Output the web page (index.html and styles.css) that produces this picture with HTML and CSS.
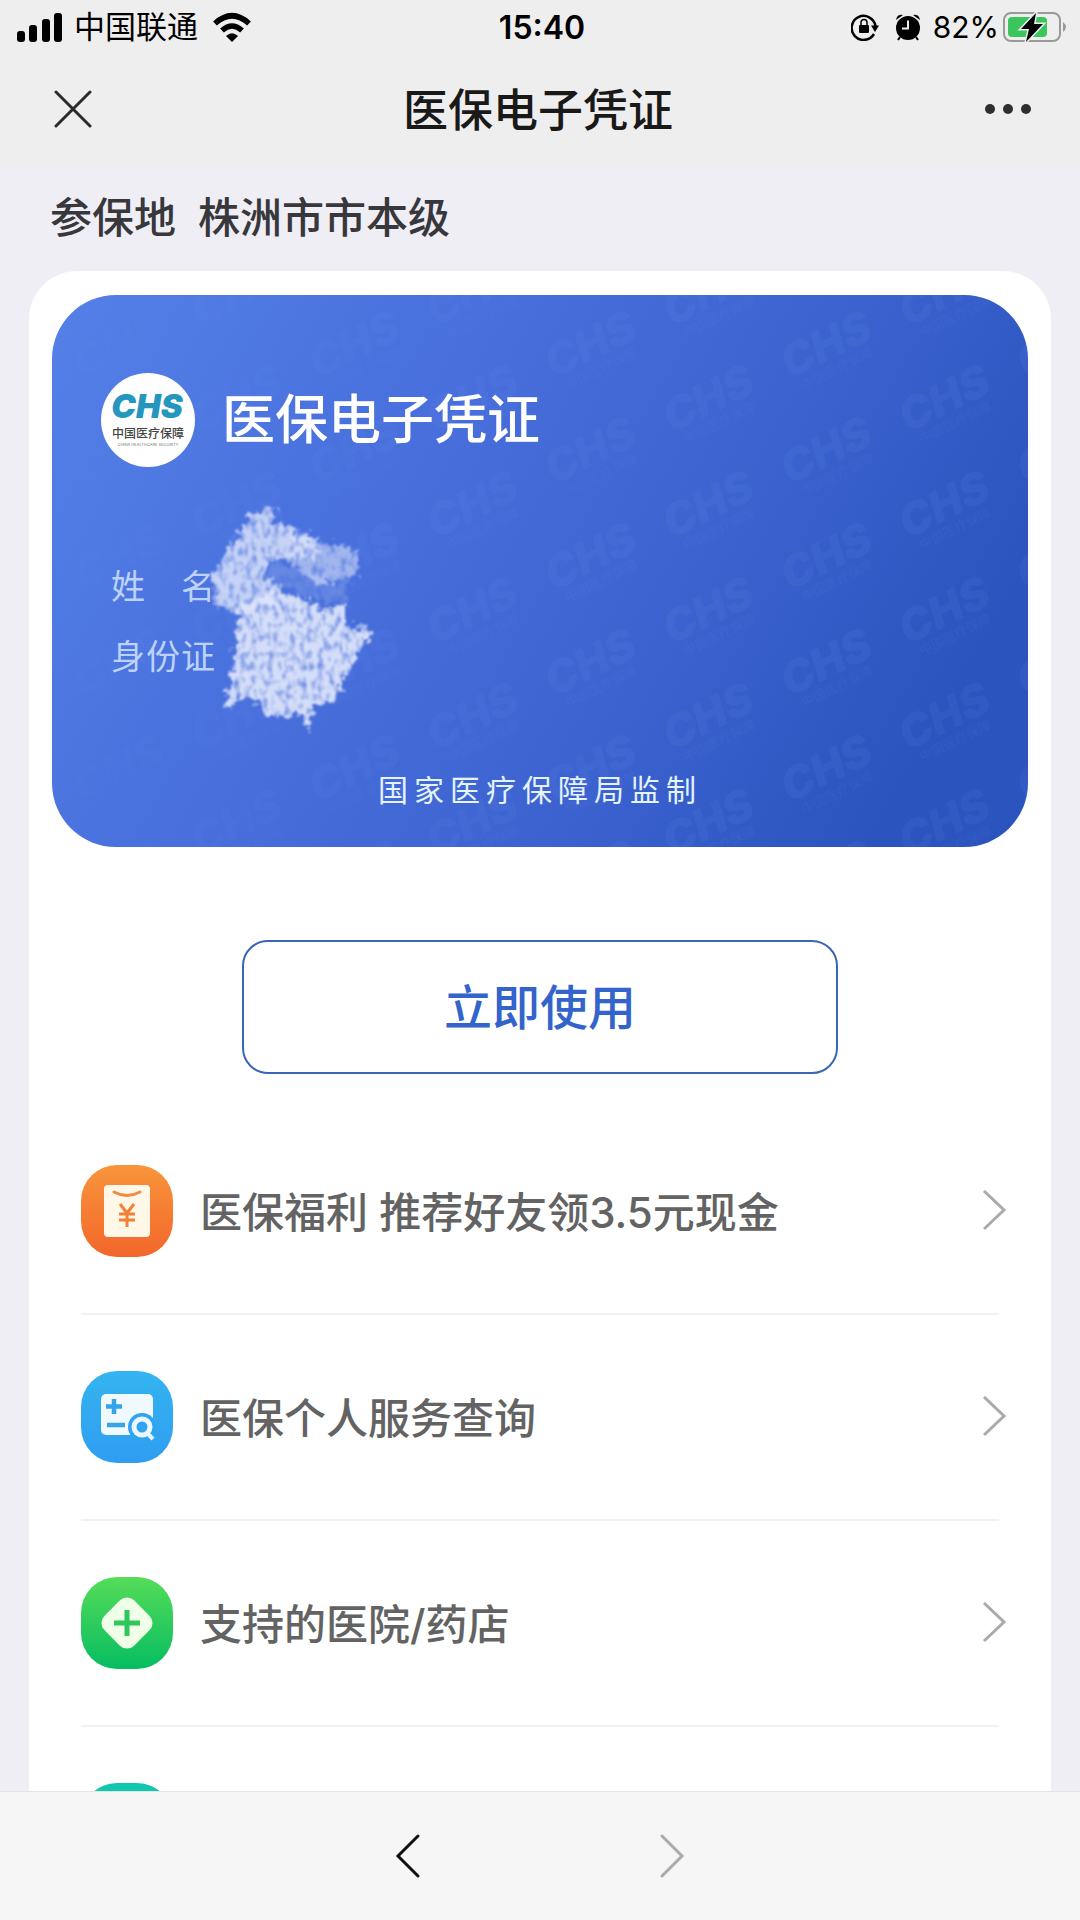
FILE: index.html
```html
<!DOCTYPE html>
<html lang="zh-CN">

<head>
    <meta charset="UTF-8">
    <meta name="viewport" content="width=device-width">
    <title>医保电子凭证</title>
    <link rel="stylesheet" href="styles.css">
</head>

<body>
    <header class="top">
        <div class="status">
            <div class="status-left">
                <svg width="46" height="30" viewBox="0 0 46 30">
                    <rect x="0" y="19" width="8" height="11" rx="3" />
                    <rect x="12" y="13" width="8" height="17" rx="3" />
                    <rect x="25" y="7" width="8" height="23" rx="3" />
                    <rect x="37" y="1" width="8" height="29" rx="3" />
                </svg>
                <span class="carrier">中国联通</span>
                <svg class="wifi" width="40" height="30" viewBox="0 0 40 30">
                    <path d="M3 11.500Q20-4 37 11.500M10 18.500Q20 9.500 30 18.500" fill="none" stroke="#000" stroke-width="5.500" />
                    <path d="M14 24Q20 18.500 26 24L20 30Z" />
                </svg>
            </div>
            <time class="clock">15:40</time>
            <div class="status-right">
                <svg width="28" height="28" viewBox="0 0 28 28">
                    <path d="M23 21A12 12 0 1 1 24.500 13" fill="none" stroke="#000" stroke-width="2.500" />
                    <path d="M20 12.500H28L24 19Z" />
                    <rect x="8" y="12" width="10" height="8" rx="1" />
                    <path d="M10 12V9.500A3 3 0 0 1 16 9.500V12" fill="none" stroke="#000" stroke-width="1.500" />
                </svg>
                <svg class="alarm" width="26" height="28" viewBox="0 0 26 28">
                    <path d="M5 24L3 27M21 24L23 27" stroke="#000" stroke-width="2" />
                    <path d="M1 7Q2 1 8 2ZM25 7Q24 1 18 2Z" />
                    <circle cx="13" cy="15" r="12" />
                    <path d="M13 7.500V15.500H7" fill="none" stroke="#eee" stroke-width="2" />
                </svg>
                <span class="percent">82%</span>
                <svg width="64" height="32" viewBox="0 0 64 32">
                    <rect x="1" y="2" width="56" height="28" rx="7" fill="none" stroke="#999" stroke-width="2" />
                    <rect x="5" y="6" width="39" height="20" rx="4" fill="#3ac55d" />
                    <path d="M60 11Q66 16 60 21Z" fill="#999" />
                    <path d="M33 2L18 18H26L23 31L40 13H31Z" stroke="#eee" stroke-width="3" paint-order="stroke" />
                </svg>
            </div>
        </div>
        <div class="navbar">
            <button type="button" class="nav-btn" aria-label="关闭">
                <svg width="38" height="38" viewBox="0 0 38 38">
                    <path d="M2 2L36 36M36 2L2 36" fill="none" stroke="#2b2b2b" stroke-width="3" stroke-linecap="round" />
                </svg>
            </button>
            <h1>医保电子凭证</h1>
            <button type="button" class="nav-btn" aria-label="更多">
                <svg width="48" height="12" viewBox="0 0 48 12" fill="#2f2f2f">
                    <circle cx="6" cy="6" r="5" />
                    <circle cx="24" cy="6" r="5" />
                    <circle cx="42" cy="6" r="5" />
                </svg>
            </button>
        </div>
    </header>

    <main>
        <p class="area"><span>参保地</span><span>株洲市市本级</span></p>

        <div class="panel">
            <section class="card">
                <svg class="watermark" width="100%" height="100%" aria-hidden="true">
                    <defs>
                        <pattern id="chs" width="236" height="106" patternUnits="userSpaceOnUse">
                            <g id="mark" transform="translate(30 84) rotate(-26)">
                                <text class="mark-big">CHS</text>
                                <text class="mark-small" x="8" y="16">中国医疗保障</text>
                            </g>
                            <use href="#mark" x="118" y="-52" />
                            <use href="#mark" x="118" y="54" />
                            <use href="#mark" y="-106" />
                        </pattern>
                    </defs>
                    <rect width="100%" height="100%" fill="url(#chs)" />
                </svg>

                <div class="card-head">
                    <svg width="94" height="94" viewBox="0 0 94 94">
                        <circle cx="47" cy="47" r="47" fill="#fff" />
                        <text class="logo-chs" x="46" y="45" text-anchor="middle">CHS</text>
                        <text class="logo-cn" x="47" y="65" text-anchor="middle">中国医疗保障</text>
                        <text class="logo-en" x="47" y="73" text-anchor="middle">CHINA HEALTHCARE SECURITY</text>
                    </svg>
                    <h2>医保电子凭证</h2>
                </div>
                <div class="info">
                    <p><span>姓</span><span>名</span></p>
                    <p><span>身</span><span>份</span><span>证</span></p>
                </div>
                <p class="issuer">国家医疗保障局监制</p>

                <!-- 涂抹遮挡个人信息 -->
                <svg class="scribble" width="180" height="240" viewBox="480 50 540 720" aria-hidden="true">
                    <defs>
                        <filter id="chalk" x="-10%" y="-10%" width="120%" height="120%">
                            <feTurbulence type="fractalNoise" baseFrequency="0.045" numOctaves="3" seed="4" result="rough" />
                            <feDisplacementMap in="SourceGraphic" in2="rough" scale="60" xChannelSelector="R" yChannelSelector="G" result="shape" />
                            <feTurbulence type="fractalNoise" baseFrequency="0.06 0.035" numOctaves="2" seed="8" />
                            <feColorMatrix values="0 0 0 0 1  0 0 0 0 1  0 0 0 0 1  2 0 0 0 -0.100" result="grain" />
                            <feComposite in="shape" in2="grain" operator="in" />
                            <feGaussianBlur stdDeviation="3" />
                        </filter>
                    </defs>
                    <g filter="url(#chalk)" fill="#dce4fa">
                        <path d="M630 105L705 80L700 130L750 140L830 180L830 240L750 235L680 240L670 290L730 320L700 380L590 400L530 380L515 290L570 200Z" opacity="0.850" />
                        <path d="M750 150L830 180L945 205L955 285L840 315L750 250Z" opacity="0.600" />
                        <path d="M600 380L690 330L780 350L850 385L925 370L930 450L985 435L990 465L915 590L880 660L820 680L800 745L775 700L710 715L640 660L590 650L575 685L555 665L580 560L590 430Z" opacity="0.950" />
                        <path d="M690 240L800 280L930 300L920 380L780 340L680 300Z" opacity="0.200" />
                    </g>
                </svg>
            </section>

            <button type="button" class="use-btn">立即使用</button>

            <ul class="list">
                <li>
                    <a href="#">
                        <svg width="92" height="92" viewBox="0 0 92 92">
                            <defs>
                                <linearGradient id="orange" x2="0" y2="1">
                                    <stop stop-color="#f8953b" />
                                    <stop offset="1" stop-color="#f3662b" />
                                </linearGradient>
                            </defs>
                            <rect width="92" height="92" rx="36" fill="url(#orange)" />
                            <rect x="23" y="20" width="46" height="52" rx="4" fill="#fff7e8" />
                            <path d="M33 27Q46 34 59 27" fill="none" stroke="#f28b3f" stroke-width="3" stroke-linecap="round" />
                            <path d="M39 39L46 48L53 39M46 48V62M38 49H54M38 55H54" fill="none" stroke="#f28036" stroke-width="3" />
                        </svg>
                        <span class="list-text">医保福利 推荐好友领3.5元现金</span>
                        <svg class="chevron" width="26" height="42" viewBox="0 0 26 42">
                            <path d="M3 1L23 20L3 39" />
                        </svg>
                    </a>
                </li>
                <li>
                    <a href="#">
                        <svg width="92" height="92" viewBox="0 0 92 92">
                            <defs>
                                <linearGradient id="blue" x2="0" y2="1">
                                    <stop stop-color="#34b4f0" />
                                    <stop offset="1" stop-color="#2f9df2" />
                                </linearGradient>
                            </defs>
                            <rect width="92" height="92" rx="36" fill="url(#blue)" />
                            <rect x="20" y="23" width="52" height="41" rx="5" fill="#eff9ff" />
                            <path d="M33 28V43M25 35.500H41M26 54H44" stroke="#35a4e8" stroke-width="4.500" />
                            <circle cx="61" cy="56" r="14" fill="#31a3f0" />
                            <circle cx="61" cy="56" r="8" fill="none" stroke="#eaf7ff" stroke-width="5" />
                            <path d="M66 62L72 68" stroke="#eaf7ff" stroke-width="4" />
                        </svg>
                        <span class="list-text">医保个人服务查询</span>
                        <svg class="chevron" width="26" height="42" viewBox="0 0 26 42">
                            <path d="M3 1L23 20L3 39" />
                        </svg>
                    </a>
                </li>
                <li>
                    <a href="#">
                        <svg width="92" height="92" viewBox="0 0 92 92">
                            <defs>
                                <linearGradient id="green" x2="0" y2="1">
                                    <stop stop-color="#55dc59" />
                                    <stop offset="1" stop-color="#06bd61" />
                                </linearGradient>
                            </defs>
                            <rect width="92" height="92" rx="36" fill="url(#green)" />
                            <rect x="25" y="25" width="42" height="42" rx="10" fill="#f0ffe8" transform="rotate(45 46 46)" />
                            <path d="M46 33V59M33 46H59" stroke="#2fc65c" stroke-width="5" />
                        </svg>
                        <span class="list-text">支持的医院/药店</span>
                        <svg class="chevron" width="26" height="42" viewBox="0 0 26 42">
                            <path d="M3 1L23 20L3 39" />
                        </svg>
                    </a>
                </li>
                <li>
                    <a href="#" aria-label="更多服务">
                        <svg width="92" height="92" viewBox="0 0 92 92">
                            <rect width="92" height="92" rx="36" fill="#12c7b0" />
                        </svg>
                    </a>
                </li>
            </ul>
        </div>
    </main>

    <nav class="toolbar">
        <button type="button" aria-label="后退">
            <svg width="26" height="46" viewBox="0 0 26 46">
                <path d="M23 3L3 23L23 43" fill="none" stroke="#111" stroke-width="3" stroke-linecap="round" />
            </svg>
        </button>
        <button type="button" aria-label="前进">
            <svg width="26" height="46" viewBox="0 0 26 46">
                <path d="M3 3L23 23L3 43" fill="none" stroke="#aaa" stroke-width="3" stroke-linecap="round" />
            </svg>
        </button>
    </nav>
</body>

</html>
```

FILE: styles.css
```css
* {
    box-sizing: border-box;
}

body {
    font-family: 'Inter', 'Noto Sans CJK SC', sans-serif;
    background-color: #efeef4;
    color: #38373c;
    display: flex;
    flex-direction: column;
    height: 100vh;
    margin: 0;
}

h1,
h2,
p,
ul {
    margin: 0;
    padding: 0;
}

svg {
    display: block;
    flex-shrink: 0;
}

button {
    font-family: inherit;
    border: none;
    background: none;
    padding: 0;
    cursor: pointer;
}

.top {
    background-color: #eee;
}

/* 状态栏 */
.status {
    display: grid;
    grid-template-columns: 1fr auto 1fr;
    align-items: center;
    height: 54px;
    padding: 0 13px 0 17px;
    color: #000;
}

.status-left,
.status-right {
    display: flex;
    align-items: center;
}

.status-right {
    justify-content: flex-end;
}

.carrier {
    font-size: 31px;
    line-height: 40px;
    margin: 0 14px 0 11px;
}

.clock {
    font-size: 32px;
    font-weight: 600;
}

.alarm {
    margin: 0 12px 0 16px;
}

.percent {
    font-size: 30px;
    margin-right: 4px;
}

.navbar {
    display: flex;
    justify-content: space-between;
    align-items: center;
    height: 112px;
    padding: 0 48px 2px 54px;
}

.nav-btn {
    display: flex;
}

h1 {
    padding-bottom: 4px;
    font-size: 45px;
    font-weight: 500;
    color: #191919;
}

main {
    flex: 1;
    min-height: 0;
    overflow: hidden;
}

.area {
    display: flex;
    gap: 22px;
    padding: 21px 50px 23px;
    font-size: 42px;
    font-weight: 500;
    line-height: 61px;
}

.panel {
    background-color: #fff;
    border-radius: 48px 48px 0 0;
    margin: 0 29px;
    padding: 24px 23px 0;
}

/* 凭证卡片 */
.card {
    position: relative;
    overflow: hidden;
    border-radius: 64px;
    padding: 78px 49px 37px;
    background: linear-gradient(120deg, #5480e8, #486fdc 35%, #3a61cd 65%, #2b54bf 88%);
    color: #fff;
}

.watermark {
    position: absolute;
    left: 0;
    top: 0;
    fill: #8fb0ff;
    opacity: 0.07;
    -webkit-mask-image: linear-gradient(90deg, rgba(0, 0, 0, 0.3), #000 60%);
    mask-image: linear-gradient(90deg, rgba(0, 0, 0, 0.3), #000 60%);
}

.mark-big {
    font-size: 44px;
    font-weight: 900;
    font-style: italic;
}

.mark-small {
    font-size: 13px;
}

.card-head {
    position: relative;
    display: flex;
    align-items: center;
    gap: 27px;
}

.logo-chs {
    font-size: 33px;
    font-weight: 900;
    font-style: italic;
    fill: #2596bd;
}

.logo-cn {
    font-size: 12px;
    font-weight: 500;
    fill: #444;
}

.logo-en {
    font-size: 4px;
    fill: #777;
}

h2 {
    font-size: 53px;
    font-weight: 500;
    line-height: 60px;
}

.info {
    position: relative;
    width: 104px;
    margin: 85px 0 78px 10px;
    font-size: 34px;
    line-height: 70px;
    color: #bdd2fb;
}

.info p {
    display: flex;
    justify-content: space-between;
}

.issuer {
    position: relative;
    font-size: 30px;
    line-height: 40px;
    letter-spacing: 6px;
    text-align: center;
    color: #e4f3ff;
}

.scribble {
    position: absolute;
    left: 148px;
    top: 202px;
}

.use-btn {
    display: block;
    width: 61%;
    margin: 93px auto 35px;
    padding: 33px 0 31px;
    border: 2px solid #3a66b5;
    border-radius: 26px;
    color: #3264cc;
    font-size: 48px;
    font-weight: 500;
    line-height: 66px;
}

.list {
    list-style: none;
    margin: 0 29px;
}

.list li {
    border-bottom: 2px solid #f1f1f1;
}

.list a {
    display: flex;
    align-items: center;
    gap: 27px;
    padding: 56px 0;
    color: #636363;
    text-decoration: none;
}

.list-text {
    flex: 1;
    padding-top: 4px;
    font-size: 42px;
    font-weight: 500;
    line-height: 60px;
}

.chevron {
    margin-right: -8px;
    fill: none;
    stroke: #aaa;
    stroke-width: 3px;
}

.toolbar {
    display: flex;
    justify-content: center;
    gap: 176px;
    padding: 41px 0;
    border-top: 1px solid #e3e3e3;
    background-color: #f6f6f6;
}

.toolbar button {
    display: flex;
    justify-content: center;
    width: 88px;
}
```
